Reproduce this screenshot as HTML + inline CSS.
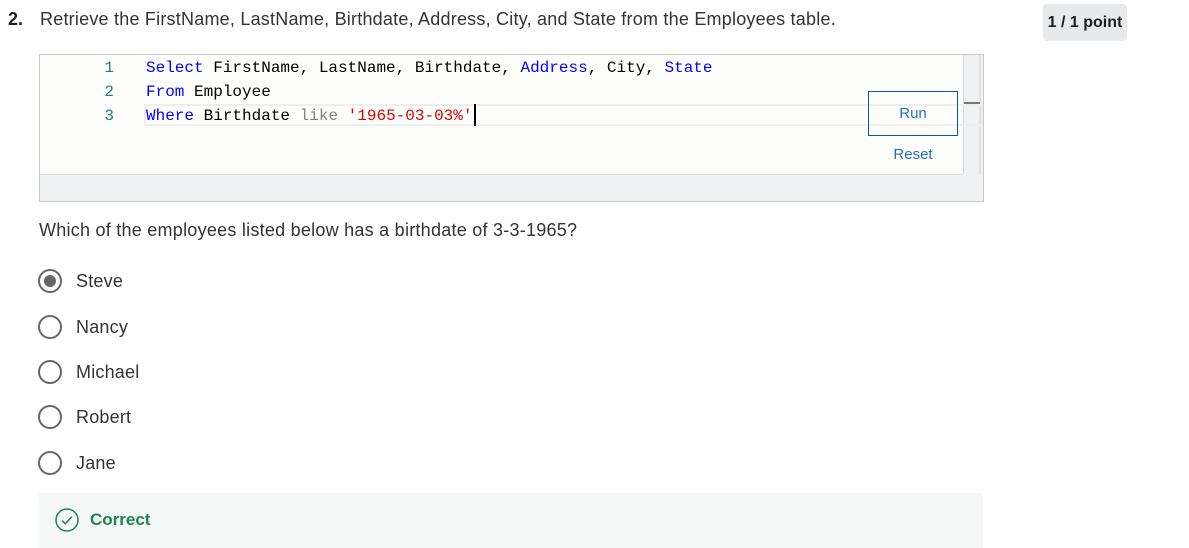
<!DOCTYPE html>
<html><head><style>
body{margin:0;width:1189px;height:548px;background:#fff;font-family:"Liberation Sans",sans-serif;color:#333;position:relative;overflow:hidden}
.a{position:absolute;white-space:nowrap}
.code{font-family:"Liberation Mono",monospace;font-size:16px;line-height:24px}
.k{color:#0000ff}.s{color:#e00000}.g{color:#808080}
.rad{position:absolute;left:38px;width:20px;height:20px;border:2.5px solid #666;border-radius:50%}
.lbl{position:absolute;left:76px;font-size:18px;color:#333;line-height:22px;letter-spacing:0.2px}
</style></head><body>
<div class="a" style="left:8px;top:8px;font-size:18px;line-height:22px;color:#1f1f1f"><b>2.</b></div>
<div class="a" style="left:40px;top:8px;font-size:18px;line-height:22px;color:#333;letter-spacing:0.22px">Retrieve the FirstName, LastName, Birthdate, Address, City, and State from the Employees table.</div>
<div class="a" style="left:1043px;top:4px;width:84px;height:37px;background:#e8e9ea;border-radius:4px;font-size:16px;font-weight:bold;line-height:37px;text-align:center;color:#1f1f1f">1 / 1 point</div>

<div class="a" style="left:39px;top:54px;width:943px;height:146px;border:1px solid #c8c8c8;background:#f0f1f3"></div>
<div class="a" style="left:40px;top:55px;width:923px;height:119px;background:#fefefc;border-bottom:1px solid #ddd"></div>
<div class="a" style="left:963px;top:55px;width:1px;height:119px;background:#d8d8d8"></div>
<div class="a" style="left:979px;top:55px;width:2px;height:119px;background:#e0e0e0"></div>
<div class="a" style="left:144px;top:104px;width:835px;height:18px;border:2px solid #eeeeee"></div>
<div class="a" style="left:964px;top:102px;width:16px;height:2px;background:#777"></div>
<div class="a code" style="left:100px;top:56px;color:#237893;width:14px;text-align:right">1<br>2<br>3</div>
<div class="a code" style="left:146px;top:56px;color:#000"><span class="k">Select</span> FirstName, LastName, Birthdate, <span class="k">Address</span>, City, <span class="k">State</span><br><span class="k">From</span> Employee<br><span class="k">Where</span> Birthdate <span class="g">like</span> <span class="s">'1965-03-03%'</span></div>
<div class="a" style="left:474px;top:104px;width:2px;height:22px;background:#000"></div>
<div class="a" style="left:868px;top:91px;width:88px;height:43px;border:1px solid #0b56a4;color:#2a6fbf;font-size:15px;line-height:43px;text-align:center">Run</div>
<div class="a" style="left:868px;top:145px;width:90px;color:#2a6fbf;font-size:15px;line-height:20px;text-align:center">Reset</div>

<div class="a" style="left:39px;top:219px;font-size:18px;line-height:22px;color:#333;letter-spacing:0.25px">Which of the employees listed below has a birthdate of 3-3-1965?</div>

<div class="rad" style="top:269px"><div style="position:absolute;left:4px;top:4px;width:12px;height:12px;border-radius:50%;background:#666"></div></div>
<div class="lbl" style="top:270px">Steve</div>
<div class="rad" style="top:315px"></div><div class="lbl" style="top:316px">Nancy</div>
<div class="rad" style="top:360px"></div><div class="lbl" style="top:361px">Michael</div>
<div class="rad" style="top:405px"></div><div class="lbl" style="top:406px">Robert</div>
<div class="rad" style="top:451px"></div><div class="lbl" style="top:452px">Jane</div>

<div class="a" style="left:39px;top:493px;width:944px;height:55px;background:#f5f8f7"></div>
<svg class="a" style="left:55px;top:508px" width="24" height="24" viewBox="0 0 24 24"><circle cx="12" cy="12" r="11" fill="none" stroke="#1f8354" stroke-width="1.5"/><path d="M7 12.5l3.3 3.3 6.5-7" fill="none" stroke="#1f8354" stroke-width="1.5"/></svg>
<div class="a" style="left:90px;top:510px;font-size:17px;font-weight:bold;color:#1f8354;line-height:20px">Correct</div>
</body></html>
